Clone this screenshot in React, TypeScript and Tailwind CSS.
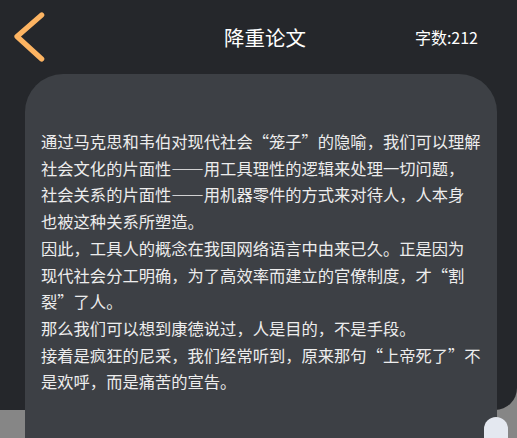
const lines = [
  "通过马克思和韦伯对现代社会“笼子”的隐喻，我们可以理解",
  "社会文化的片面性——用工具理性的逻辑来处理一切问题，",
  "社会关系的片面性——用机器零件的方式来对待人，人本身",
  "也被这种关系所塑造。",
  "因此，工具人的概念在我国网络语言中由来已久。正是因为",
  "现代社会分工明确，为了高效率而建立的官僚制度，才“割",
  "裂”了人。",
  "那么我们可以想到康德说过，人是目的，不是手段。",
  "接着是疯狂的尼采，我们经常听到，原来那句“上帝死了”不",
  "是欢呼，而是痛苦的宣告。",
];

export default function App() {
  return (
    <div
      lang="zh-CN"
      className="relative h-[438px] w-[517px] overflow-hidden bg-[#868686] font-['Noto_Sans_CJK_SC',sans-serif]"
    >
      {/* dark backdrop behind header */}
      <div className="absolute inset-x-0 top-0 h-[410px] rounded-br-[22px] bg-[#25272b]" />

      <div className="relative">
        {/* header */}
        <div className="flex h-[74px] items-center">
          <div className="flex w-[224px] items-center pl-[12px]">
            <svg width="36" height="56" viewBox="0 0 36 56" fill="none">
              <path
                d="M29.7 6 L5 27.5 L29.7 50"
                stroke="#fdb462"
                strokeWidth="5.2"
                strokeLinecap="round"
                strokeLinejoin="round"
              />
            </svg>
          </div>
          <h1 className="text-[20.5px] leading-none text-white">降重论文</h1>
          <div className="flex-1 pr-[39px] text-right text-[16px] leading-none text-white">
            字数:212
          </div>
        </div>

        {/* content card */}
        <div className="ml-[25px] mr-[20px] h-[400px] rounded-t-[38px] bg-[#3d4045] pl-[16px] pt-[54px] text-[16.3px] leading-[26.7px] text-[#ededed]">
          {lines.map((line, i) => (
            <div key={i} className="whitespace-nowrap">
              {line}
            </div>
          ))}
        </div>
      </div>

      {/* scroll handle */}
      <div className="absolute left-[484px] top-[417px] h-[40px] w-[24px] rounded-t-full bg-[#e4e8f0]" />
    </div>
  );
}
